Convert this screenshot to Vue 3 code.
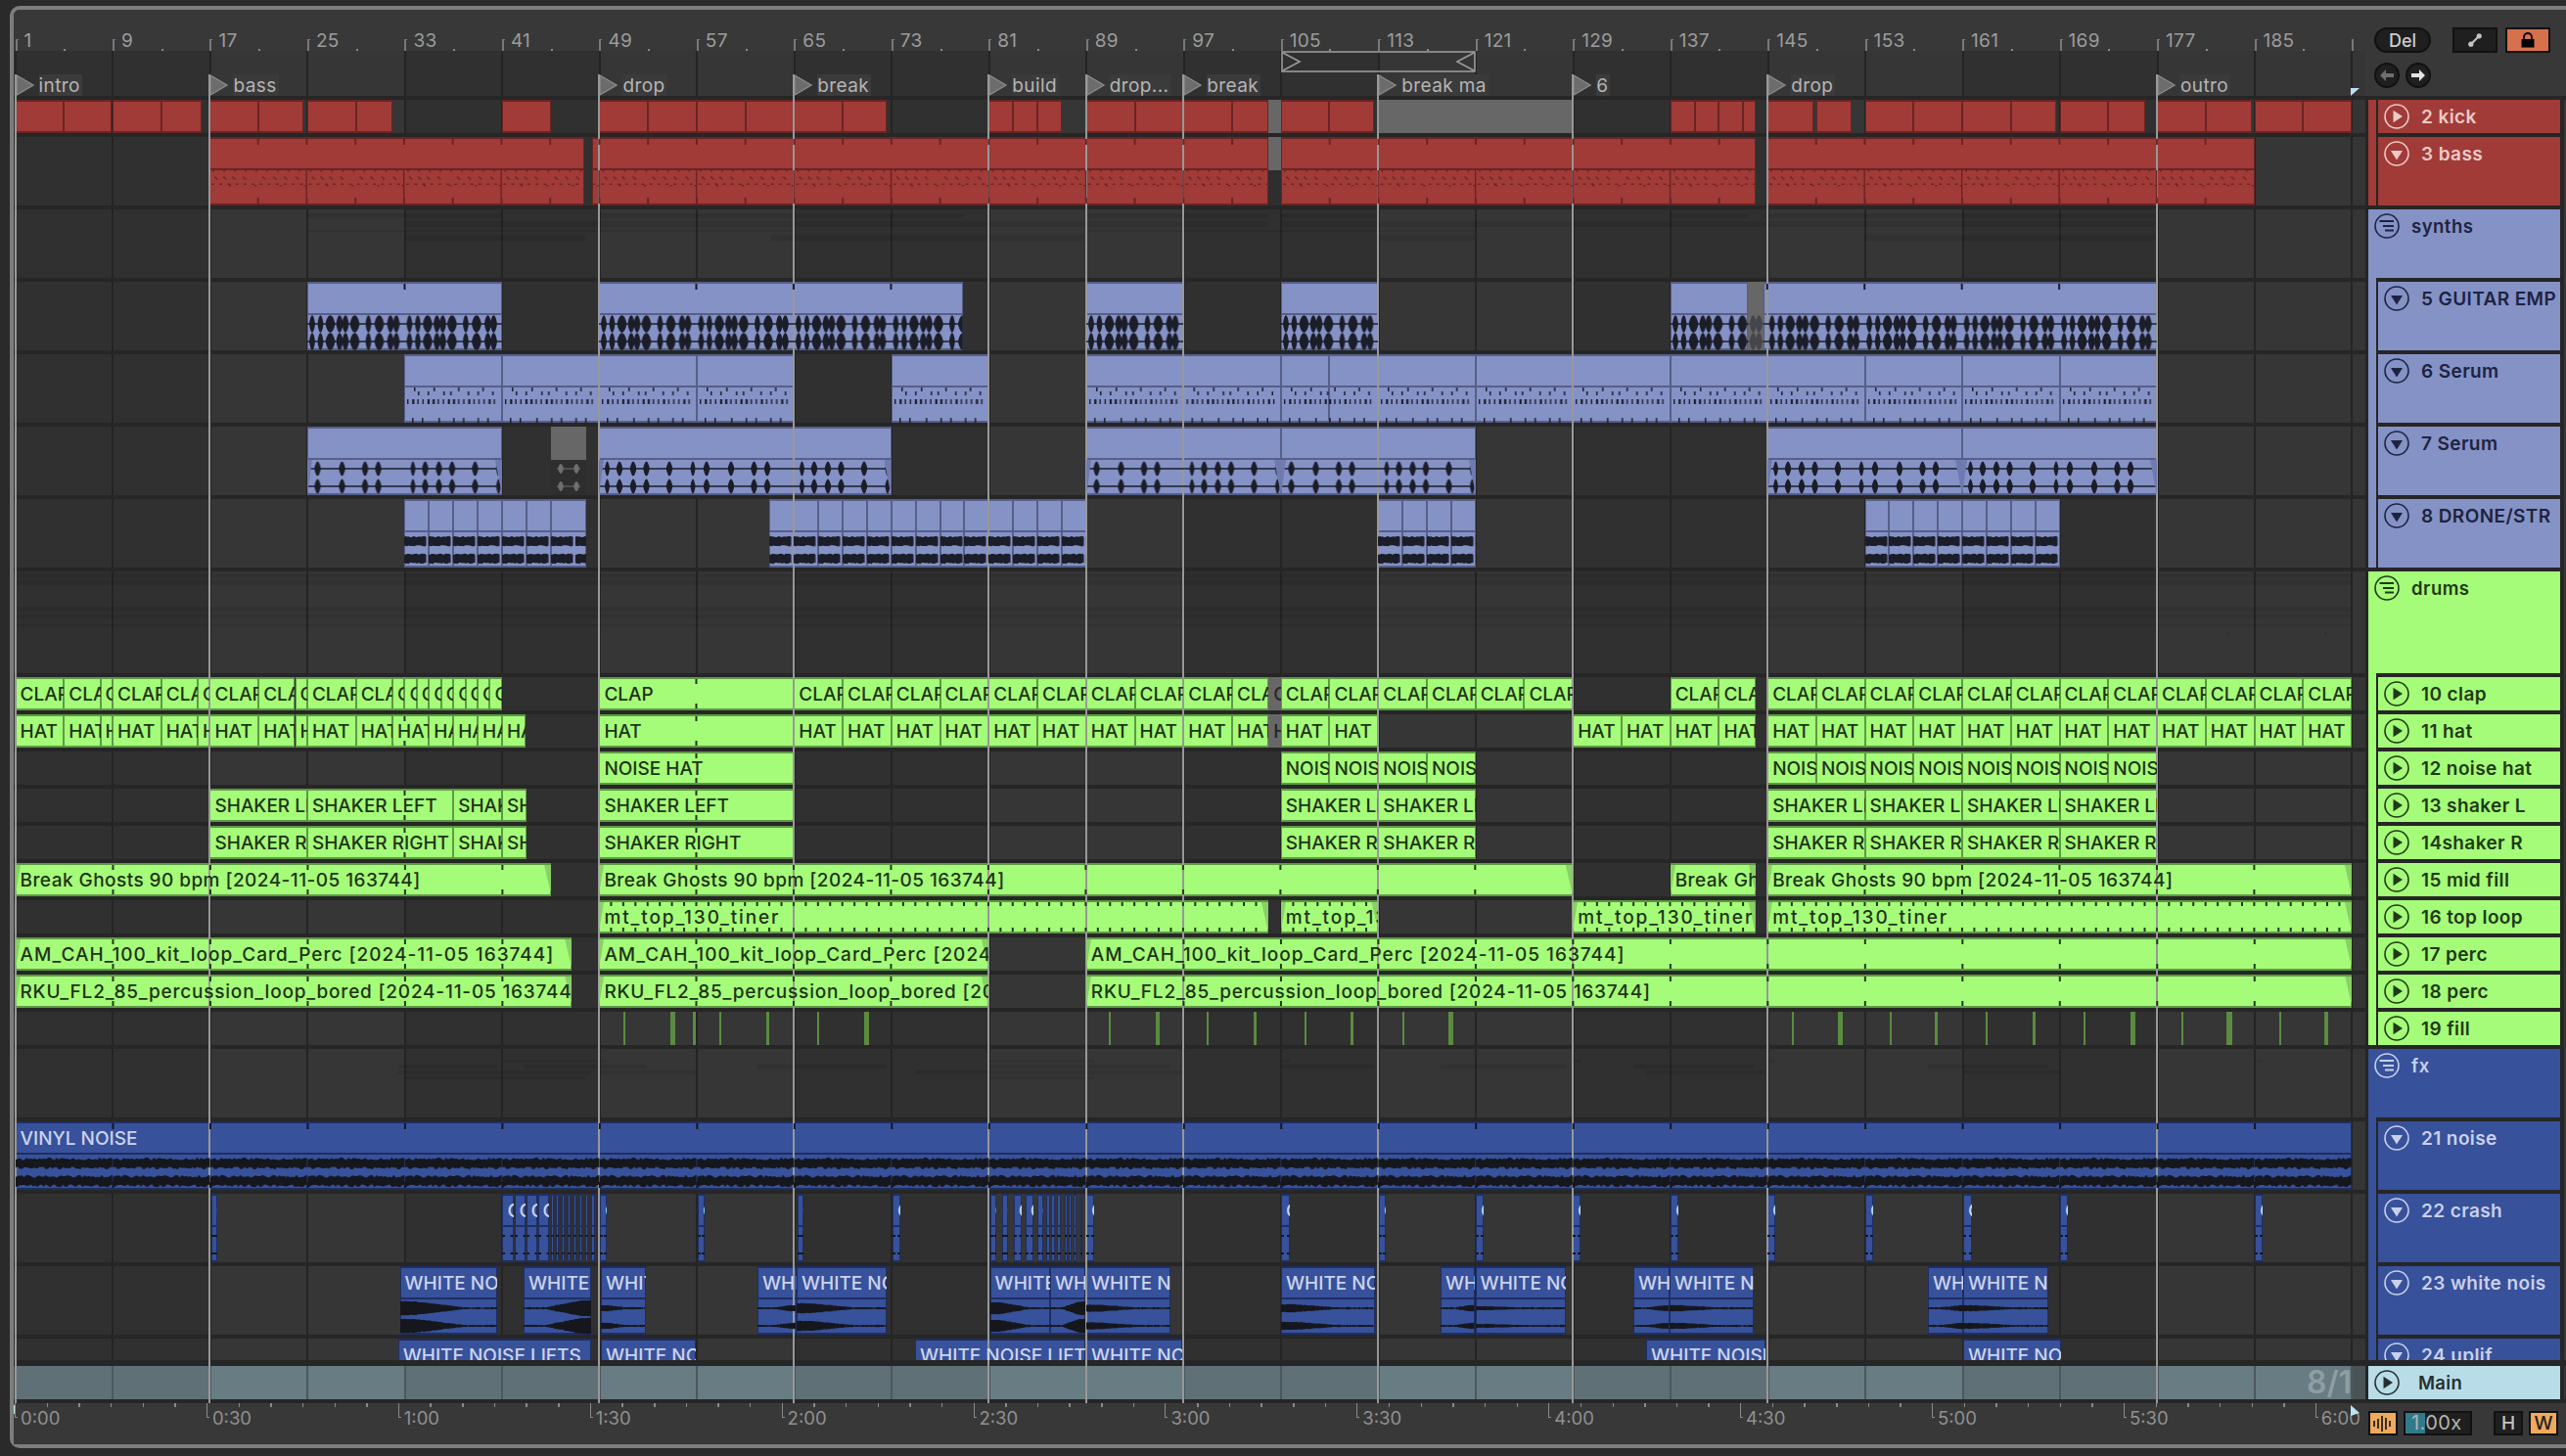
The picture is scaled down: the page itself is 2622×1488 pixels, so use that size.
<script setup>
const BAR = 12.435
const B = (b) => 1.5 + (b - 1) * BAR
const P = (x) => x - 14
const OCT = BAR * 8

function rng(seed) {
  let s = seed
  return () => {
    s = (s * 1664525 + 1013904223) % 4294967296
    return s / 4294967296
  }
}
const rects = (list) => list.map(([x, y, w, h]) => `M${x} ${y}h${w}v${h}h${-w}z`).join('')
const lens = (cx, cy, hw, a) =>
  `M${cx - hw} ${cy}Q${cx} ${cy - 2 * a} ${cx + hw} ${cy}Q${cx} ${cy + 2 * a} ${cx - hw} ${cy}Z`
const blob = (cx, cy, hw, a) => {
  const k = a * 1.33
  const h = hw * 0.55
  return `M${cx - hw} ${cy}C${cx - h} ${cy - k} ${cx + h} ${cy - k} ${cx + hw} ${cy}C${cx + h} ${cy + k} ${cx - h} ${cy + k} ${cx - hw} ${cy}Z`
}

function band(w, cy, amp, jit, step, seed) {
  const r = rng(seed)
  const top = []
  const bot = []
  for (let x = 0; x <= w + 0.01; x += step) {
    const e = amp + (r() - 0.5) * jit
    const e2 = amp + (r() - 0.5) * jit
    top.push(`${x.toFixed(1)} ${(cy - e).toFixed(1)}`)
    bot.unshift(`${x.toFixed(1)} ${(cy + e2).toFixed(1)}`)
  }
  return 'M' + top.concat(bot).join('L') + 'Z'
}

const guitarBlobs = [[5, 3], [13.5, 3], [23.5, 5], [33, 3.5], [39, 3.5], [48.5, 5], [62.5, 3], [73.5, 5], [85, 3.5], [91, 3.5]]
const guitarD =
  rects([[0, 42.2, OCT, 1.6], [0, 60.2, OCT, 1.6]]) +
  guitarBlobs.map(([x, w]) => blob(x, 43, w, 8.8) + blob(x, 61, w, 8.8)).join('')

const s6 = []
;[10, 30, 55, 80].forEach((x) => s6.push([x, 34, 1.5, 4]))
;[14, 24, 40, 47, 65, 75, 90].forEach((x) => s6.push([x, 38, 1.5, 4]))
for (let x = 3; x < 96; x += 5.2) s6.push([x, 46, x % 3 > 1.8 ? 2.2 : 1.4, 5])
;[8, 18, 35, 50, 60, 75, 85].forEach((x) => s6.push([x, 65, 1.5, 5]))

const s7Notes = [8.5, 21, 35, 48.5, 72, 96, 110, 135, 158.5, 172]
const serum7D =
  rects([[0, 42.3, OCT * 2, 1.5], [0, 60.3, OCT * 2, 1.5]]) +
  s7Notes.map((x, i) => {
    const w = i % 5 === 0 ? 2.6 : 3.4
    return lens(x, 43, w, 7.5) + lens(x, 61, w, 7.5)
  }).join('')

const droneD = band(23.5, 43, 4.6, 1.6, 1.5, 3) + band(23.5, 61, 4.6, 1.6, 1.5, 8)

const bs = []
;[5, 14, 23, 34, 54, 65, 76, 88].forEach((x) => {
  bs.push([x, 40.5, 2, 1.5], [x + 1.5, 42, 2, 1.5])
})
for (let x = 2; x < 98; x += 8.2) bs.push([x, 47.5, 3, 1.5])
;[20, 46, 72, 97].forEach((x) => bs.push([x, 49, 2, 1.5]))
for (let x = 3; x < 98; x += 11) bs.push([x, 34, 2, 1.5])

const vinylD = band(OCT, 43, 4.8, 3, 2.2, 11) + band(OCT, 61, 4.8, 3, 2.2, 29)

const patterns = [
  { id: 'w-guitar', w: OCT, d: guitarD, fill: '#1b1d28' },
  { id: 'w-serum6', w: OCT, d: rects(s6), fill: '#1b1d28' },
  { id: 'w-serum7', w: OCT * 2, d: serum7D, fill: '#1b1d28' },
  { id: 'w-drone', w: BAR * 2, d: droneD, fill: '#1b1d28' },
  { id: 'w-bass', w: OCT, d: rects(bs), fill: '#6a2423' },
  { id: 'w-vinyl', w: OCT, d: vinylD, fill: '#15171d' },
]

function ticksFor(a, b, h, step, top, bot) {
  const list = []
  for (let k = 0; k * step < 200; k++) {
    const x = B(1 + k * step)
    if (x > a + 2 && x < b - 2) {
      if (top) list.push([x - 1, 2, 2, top])
      if (bot) list.push([x - 1, h - 2 - bot, 2, bot])
    }
  }
  return rects(list)
}

function fades(a, b, y0, y1, left, right) {
  let d = ''
  if (left) d += `M${a} ${y0}L${a + 5} ${y0}L${a} ${y1}Z`
  if (right) d += `M${b - 7} ${y0}L${b} ${y0}L${b} ${y1}Z`
  return d
}

function whiteWave(a, b, amp, dir) {
  const parts = []
  ;[43, 61].forEach((cy, ci) => {
    const r = rng(17 + ci + Math.round(a))
    const top = []
    const bot = []
    for (let x = a; x <= b; x += 1.5) {
      const t = (x - a) / (b - a)
      const u = dir > 0 ? t : 1 - t
      const env = Math.max(0.9, amp * Math.min(1, Math.max(0, 1.25 - u * 1.7)))
      const e = env + (r() - 0.5) * 0.6
      top.push(`${x.toFixed(1)} ${(cy - e).toFixed(1)}`)
      bot.unshift(`${x.toFixed(1)} ${(cy + e).toFixed(1)}`)
    }
    parts.push('M' + top.concat(bot).join('L') + 'Z')
  })
  return parts.join('')
}

function crashWave(a, b) {
  const w = Math.min(3, (b - a) / 2)
  return rects([[a, 42, w, 2], [b - w, 42, w, 2], [a, 60, w, 2], [b - w, 60, w, 2]])
}

function mk(a, b, label, o = {}) {
  return { a, b, w: b - a, label, ...o }
}
function runs(list, label, o = {}) {
  const out = []
  list.forEach((r) => {
    for (let i = 0; i < r.length - 1; i++) out.push(mk(B(r[i]), B(r[i + 1]), label, o))
  })
  return out
}
const off = (x, y, label, o = {}) => mk(B(x), B(y), label, { off: true, ...o })

function art(c, kind, h) {
  const res = { ticks: '', fade: '', wave: '', pattern: '' }
  if (c.off) {
    if (kind === 'guitar') {
      res.pattern = 'w-guitar'
      return res
    }
    if (kind === 'serum7') {
      const m = c.a + c.w / 2
      res.wave = rects([[c.a + 6, 42.5, c.w - 12, 1], [c.a + 6, 60.5, c.w - 12, 1]]) +
        lens(m - 8, 43, 3, 5) + lens(m + 8, 43, 3, 5) + lens(m - 8, 61, 3, 5) + lens(m + 8, 61, 3, 5)
      return res
    }
    return null
  }
  if (kind === 'green') {
    const st = c.step || 8
    res.ticks = ticksFor(c.a, c.b, h, st, st === 1 ? 4 : 5, st === 1 ? 4 : 5)
    if (c.fade) res.fade = fades(c.a, c.b, 2, h - 2, true, true)
  } else if (kind === 'bass') {
    res.pattern = 'w-bass'
    res.ticks = ticksFor(c.a, c.b, h, 4, 6, 6) + ticksFor(c.a, c.b, 70, 8, 0, 34).replace(/h2/g, 'h1.4').replace(/h-2/g, 'h-1.4')
  } else if (kind === 'guitar') {
    res.pattern = 'w-guitar'
    res.ticks = ticksFor(c.a, c.b, h, 8, 6, 0)
  } else if (kind === 'serum6') {
    res.pattern = 'w-serum6'
  } else if (kind === 'serum7') {
    res.pattern = 'w-serum7'
    res.fade = fades(c.a, c.b, 34, 70, true, true)
  } else if (kind === 'drone') {
    res.pattern = 'w-drone'
  } else if (kind === 'vinyl') {
    res.pattern = 'w-vinyl'
    res.ticks = ticksFor(c.a, c.b, h, 8, 6, 0) + ticksFor(c.a, c.b, h, 8, 0, 6)
  } else if (kind === 'crash') {
    res.wave = crashWave(c.a, c.b)
  } else if (kind === 'white') {
    res.wave = whiteWave(c.a, c.b, c.amp, c.dir)
  }
  return res
}

const eight = (from, to) => {
  const l = []
  for (let b = from; b <= to; b += 4) l.push(b)
  return l
}

const kickClips = runs(
  [[1, 5, 8.9], [9, 13, 16.3], [17, 21, 24.7], [25, 29, 32], [41, 45], [49, 53, 57, 61, 65, 69, 72.65],
   [81, 83, 85, 87], [89, 93, 97, 101, 104], [105, 109, 112.7], [137, 139, 141, 143, 144], [145, 148.8],
   [149, 151.9], [153, 157, 161, 165, 168.7], [169, 173, 176], [177, 181, 184.8], [185, 189, 193]],
  ''
).concat([off(104, 105, ''), off(113, 129, '')])

const bassClips = runs([[17, 47.8], [48.4, 104], [105, 144], [145, 185]], '').concat([off(104, 105, '', { dark: true })])

const guitarClips = runs([[25, 41], [49, 78.9], [89, 97], [105, 113], [137, 143.4], [144.7, 177]], '').concat([off(143.4, 144.7, '', { solid: true })])
const serum6Clips = runs(
  [[33, 41, 49, 57, 65], [73, 81], [89, 105, 109, 113, 121, 129, 137, 145, 153, 161, 169, 177]], '')
const serum7Clips = runs([[25, 41], [49, 73], [89, 105, 121], [145, 161, 177]], '').concat([off(45, 47.9, '', { dark: true })])
const droneClips = runs(
  [[33, 35, 37, 39, 41, 43, 45, 47.9],
   [63, 67, 69, 71, 73, 75, 77, 79, 81, 83, 85, 87, 89],
   [113, 115, 117, 119, 121],
   [153, 155, 157, 159, 161, 163, 165, 167, 169]], '')

const clapClips = runs(
  [[1, 5, 8, 9, 13, 16, 17, 21, 24, 25, 29, 32, 33, 34, 35, 36, 37, 38, 39, 40, 41],
   [49, 65, 69, 73, 77, 81, 85, 89, 93, 97, 101, 104],
   [105, 109, 113, 117, 121, 125, 129], [137, 141, 144], eight(145, 193)], 'CLAP'
).concat([off(104, 105, 'CLAP')])
const hatClips = runs(
  [[1, 5, 8, 9, 13, 16, 17, 21, 24, 25, 29, 32, 35, 37, 39, 41, 42.9],
   [49, 65, 69, 73, 77, 81, 85, 89, 93, 97, 101, 104],
   [105, 109, 113], [129, 133, 137, 141, 144], eight(145, 193)], 'HAT'
).concat([off(104, 105, 'HAT')])
const noiseHatClips = runs([[49, 65], [105, 109, 113, 117, 121], eight(145, 177)], 'NOISE HAT')
const shaker = (t) =>
  runs([[17, 25, 37, 41, 43], [49, 65], [105, 113, 121], [145, 153, 161, 169, 177]], t)

const ghostA = [
  [313, 513, 4, 5], [612, 984, 4, 5], [1109, 1296, 4, 5], [1309, 1409, 4, 5], [1707, 1786, 4, 5], [1802, 2204, 4, 5],
  [413, 1296, 12, 6], [1309, 2204, 12, 6],
  [313, 810, 21, 2], [1109, 1507, 21, 2],
  [413, 598, 26, 6], [787, 1108, 26, 6], [1409, 1507, 26, 6], [1905, 2204, 26, 6],
]
const ghostB = [
  [15, 2403, 2, 5], [15, 2403, 9, 5], [15, 2403, 36, 5], [15, 2403, 44, 4], [15, 2403, 54, 2],
  [2275, 2279, 62, 4], [2375, 2378, 62, 4],
]
const ghostC = [
  [513, 620, 11, 3], [1011, 1118, 11, 3], [1309, 1318, 11, 3], [1608, 1616, 11, 3], [1806, 1814, 11, 3], [2304, 2312, 11, 3],
  [408, 508, 16, 4], [535, 660, 16, 4], [774, 906, 16, 4], [1011, 1196, 16, 4], [1309, 1404, 16, 4], [1472, 1600, 16, 4], [1669, 1792, 16, 4], [1970, 2093, 16, 4],
  [406, 604, 22, 4], [614, 711, 22, 4], [935, 1208, 22, 4], [1682, 1804, 22, 4], [2006, 2106, 22, 4],
  [413, 598, 28, 3], [1011, 1118, 28, 3],
]

const fillSmall = [637, 735, 835, 1133, 1233, 1333, 1433, 1831, 1931, 2029, 2129, 2229, 2329]
const fillWide = [[685, 5], [783, 3], [883, 5], [1181, 4], [1281, 3], [1380, 3], [1480, 5], [1878, 5], [1977, 3], [2077, 3], [2177, 5], [2275, 6], [2375, 4]]
const fillBars = fillSmall
  .map((x) => ({ a: P(x), w: 1.5 }))
  .concat(fillWide.map(([x, w]) => ({ a: P(x), w })))
  .concat([{ a: P(708), w: 3 }])

const crashPx = [[216, 222], [513.4, 525], [525.5, 537], [537.5, 549], [549.5, 561], [563, 566], [568, 571], [574, 577], [580, 583], [586, 589], [592, 595], [598, 601], [604, 607.5], [613, 620], [713, 720], [815, 821], [912, 920], [1011.6, 1018], [1024, 1030], [1035.7, 1044], [1047.8, 1055.8], [1059.8, 1066.5], [1068.8, 1072.8], [1074, 1078], [1080.4, 1084.4], [1088, 1090.6], [1092, 1094.6], [1097, 1099.6], [1104, 1106], [1110, 1118], [1309, 1318], [1409, 1416], [1508, 1516], [1607, 1615], [1707, 1715], [1806, 1814], [1906, 1914], [2006, 2015], [2105, 2113], [2304, 2312]]
const crashClips = crashPx.map(([a, b]) => mk(P(a), P(b), 'CRASH'))

const whitePx = [[408.5, 508, 1, 7], [535, 604, -1, 8], [614, 660, 1, 3], [774, 814, -1, 3], [814, 906, 1, 5], [1011.6, 1072.8, 1, 6], [1073, 1109, -1, 7], [1110, 1196, 1, 3.5], [1309, 1404.5, 1, 4], [1472, 1507, -1, 3], [1507.6, 1600, 1, 2], [1669, 1706, -1, 3], [1706, 1792, 1, 3], [1970, 2006, -1, 3], [2006, 2093, 1, 3]]
const whiteClips = whitePx.map(([a, b, dir, amp]) => mk(P(a), P(b), 'WHITE NOISE', { dir, amp }))

const upliftPx = [[406.7, 604, 'WHITE NOISE LIFTS'], [614, 711, 'WHITE NOISE'], [935, 1109, 'WHITE NOISE LIFTS'], [1110, 1208, 'WHITE NOISE'], [1682, 1804, 'WHITE NOISE LIFTS'], [2006, 2106, 'WHITE NOISE']]
const upliftClips = upliftPx.map(([a, b, l]) => mk(P(a), P(b), l))

function track(name, icon, h, kind, clips, extra = {}) {
  return { name, icon, h, kind, clips, ...extra }
}

const groups = [
  {
    color: 'red', name: '', tracks: [
      track('2 kick', 'play', 34, 'plain', kickClips),
      track('3 bass', 'down', 70, 'bass', bassClips),
    ],
  },
  {
    color: 'peri', name: 'synths', headH: 70, ghost: ghostA, tracks: [
      track('5 GUITAR EMP', 'down', 70, 'guitar', guitarClips),
      track('6 Serum', 'down', 70, 'serum6', serum6Clips),
      track('7 Serum', 'down', 70, 'serum7', serum7Clips),
      track('8 DRONE/STR', 'down', 70, 'drone', droneClips),
    ],
  },
  {
    color: 'green', name: 'drums', headH: 104, ghost: ghostB, tracks: [
      track('10 clap', 'play', 34, 'green', clapClips),
      track('11 hat', 'play', 34, 'green', hatClips),
      track('12 noise hat', 'play', 34, 'green', noiseHatClips),
      track('13 shaker L', 'play', 34, 'green', shaker('SHAKER LEFT')),
      track('14shaker R', 'play', 34, 'green', shaker('SHAKER RIGHT')),
      track('15 mid fill', 'play', 34, 'green', runs([[1, 45], [49, 129], [137, 144], [145, 193]], 'Break Ghosts 90 bpm [2024-11-05 163744]', { fade: true, ls: 0.45 })),
      track('16 top loop', 'play', 34, 'green', runs([[49, 104], [105, 113], [129, 144], [145, 193]], 'mt_top_130_tiner', { fade: true, step: 1, ls: 1.9 })),
      track('17 perc', 'play', 34, 'green', runs([[1, 46.7], [49, 81], [89, 193]], 'AM_CAH_100_kit_loop_Card_Perc [2024-11-05 163744]', { fade: true, ls: 1 })),
      track('18 perc', 'play', 34, 'green', runs([[1, 46.7], [49, 81], [89, 193]], 'RKU_FL2_85_percussion_loop_bored [2024-11-05 163744]', { fade: true, ls: 0.8 })),
      track('19 fill', 'play', 34, 'fill', [], { bars: fillBars }),
    ],
  },
  {
    color: 'blue', name: 'fx', headH: 70, ghost: ghostC, tracks: [
      track('21 noise', 'down', 70, 'vinyl', runs([[1, 193]], 'VINYL NOISE')),
      track('22 crash', 'down', 70, 'crash', crashClips),
      track('23 white nois', 'down', 70, 'white', whiteClips),
      track('24 uplif', 'down', 70, 'plain-tall', upliftClips),
    ],
  },
]

const lanes = []
groups.forEach((g) => {
  if (g.name) lanes.push({ key: g.name, h: g.headH, color: g.color, clips: [], bars: [], ghost: (g.ghost || []).map(([x0, x1, y, h]) => ({ a: P(x0), w: x1 - x0, y, h })) })
  g.tracks.forEach((t) => {
    const tall = t.h === 70
    lanes.push({
      key: t.name, h: t.h, color: g.color, ghost: [], bars: t.bars || [],
      clips: t.clips.map((c) => {
        const a = art(c, t.kind, t.h)
        return { ...c, tall, art: a, vb: `${c.a} 0 ${c.w} ${t.h}` }
      }),
    })
  })
})

const rulerBars = []
for (let b = 1; b <= 185; b += 8) rulerBars.push({ n: b, x: B(b) })
const rulerEnd = B(193)
const rulerDots = []
for (let b = 5; b <= 189; b += 8) rulerDots.push(B(b))

const markers = [[1, 'intro'], [17, 'bass'], [49, 'drop'], [65, 'break'], [81, 'build'], [89, 'drop...'], [97, 'break'], [113, 'break ma'], [129, '6'], [145, 'drop'], [177, 'outro']]
  .map(([b, t]) => ({ x: B(b), t }))
const locators = markers.map((m) => m.x)
const loop = { x: B(105), w: B(121) - B(105) }

const timeLabels = []
for (let i = 0; i <= 12; i++) {
  const s = i * 30
  timeLabels.push({ x: P(21) + i * 195.9, t: `${Math.floor(s / 60)}:${String(s % 60).padStart(2, '0')}` })
}
const timeMinor = []
for (let i = 0; i < 72; i++) {
  if (i % 6 !== 0) timeMinor.push(P(15) + i * 32.65)
}
</script>

<template>
  <div class="page">
    <svg class="defs" width="0" height="0">
      <defs>
        <pattern v-for="p in patterns" :id="p.id" :key="p.id" patternUnits="userSpaceOnUse" x="1.5" y="0" :width="p.w" height="70">
          <path :d="p.d" :fill="p.fill" />
        </pattern>
      </defs>
    </svg>

    <div class="frame">
      <div class="top">
        <div class="top-left">
          <div class="ruler">
            <div v-for="r in rulerBars" :key="r.n" class="rtick" :style="{ left: r.x + 'px' }">
              <span class="rnum">{{ r.n }}</span>
            </div>
            <div class="rtick end" :style="{ left: rulerEnd + 'px' }"></div>
            <i v-for="d in rulerDots" :key="d" class="rdot" :style="{ left: d + 'px' }"></i>
          </div>
          <div class="markers lane">
            <div v-for="m in markers" :key="m.x + m.t" class="marker" :style="{ left: m.x + 'px' }">
              <svg width="20" height="22" viewBox="0 0 20 22"><path d="M1 1 L18 11 L1 21 Z" fill="#6c6c6c" stroke="#8a8a8a" stroke-width="1.4" /></svg>
              <span class="marker-label">{{ m.t }}</span>
            </div>
            <svg class="end-flag" width="10" height="10" viewBox="0 0 10 10"><path d="M0 2 L9 2 L0 10 Z" fill="#bfe3ee" /></svg>
          </div>
          <div class="loop" :style="{ left: loop.x + 'px', width: loop.w + 'px' }">
            <svg :width="loop.w" height="22" :viewBox="`0 0 ${loop.w} 22`">
              <rect x="1" y="1" :width="loop.w - 2" height="20" fill="none" stroke="#9a9a9a" stroke-width="1.6" />
              <path d="M2 2 L19 11 L2 20" fill="none" stroke="#9a9a9a" stroke-width="1.6" />
              <path :d="`M${loop.w - 2} 2 L${loop.w - 19} 11 L${loop.w - 2} 20`" fill="none" stroke="#9a9a9a" stroke-width="1.6" />
            </svg>
          </div>
        </div>
        <div class="controls">
          <div class="ctl-row">
            <button class="pill">Del</button>
            <button class="sq">
              <svg width="16" height="16" viewBox="0 0 16 16"><path d="M3.5 12.5 L12.5 3.5" stroke="#c4c4c4" stroke-width="2" /><circle cx="3.8" cy="12.2" r="2.6" fill="#c4c4c4" /><circle cx="12.2" cy="3.8" r="2.6" fill="#c4c4c4" /></svg>
            </button>
            <button class="sq lock">
              <svg width="16" height="16" viewBox="0 0 16 16"><path d="M4 7 V5 a4 4 0 0 1 8 0 V7" fill="none" stroke="#000" stroke-width="1.8" /><rect x="1.5" y="7" width="13" height="8.5" fill="#000" /></svg>
            </button>
          </div>
          <div class="ctl-row arrows">
            <button class="round">
              <svg width="16" height="14" viewBox="0 0 16 14"><path d="M1 7 L7 1 V5 H15 V9 H7 V13 Z" fill="#6e6e6e" /></svg>
            </button>
            <button class="round">
              <svg width="16" height="14" viewBox="0 0 16 14"><path d="M15 7 L9 1 V5 H1 V9 H9 V13 Z" fill="#e2e2e2" /></svg>
            </button>
          </div>
        </div>
      </div>

      <div class="body">
        <div class="timeline">
          <div v-for="l in lanes" :key="l.key" class="lane" :style="{ height: l.h + 'px' }">
            <i v-for="(g, i) in l.ghost" :key="i" class="ghost" :style="{ left: g.a + 'px', width: g.w + 'px', top: g.y + 'px', height: g.h + 'px' }"></i>
            <i v-for="(b, i) in l.bars" :key="i" class="fillbar" :style="{ left: b.a + 'px', width: b.w + 'px' }"></i>
            <div
              v-for="(c, i) in l.clips"
              :key="i"
              class="clip"
              :class="[c.off ? 'off' : l.color, { tall: c.tall, dark: c.dark, solid: c.solid }]"
              :style="{ left: c.a + 'px', width: c.w + 'px' }"
            >
              <svg v-if="c.art" class="art" :width="c.w" :height="l.h" :viewBox="c.vb" preserveAspectRatio="none">
                <rect v-if="c.art.pattern" class="wave-fill" :x="c.a" y="34" :width="c.w" height="36" :fill="`url(#${c.art.pattern})`" />
                <path v-if="c.art.fade" class="fade" :d="c.art.fade" />
                <path v-if="c.art.wave" class="wave" :d="c.art.wave" />
                <path v-if="c.art.ticks" class="tick" :d="c.art.ticks" />
              </svg>
              <span v-if="c.label" class="clip-label" :style="{ letterSpacing: (c.ls || 0) + 'px' }">{{ c.label }}</span>
            </div>
          </div>
        </div>

        <div class="heads">
          <section v-for="g in groups" :key="g.color" class="group" :class="g.color">
            <div v-if="g.name" class="group-head" :style="{ height: g.headH + 'px' }">
              <svg class="ico" width="28" height="28" viewBox="0 0 28 28">
                <circle cx="14" cy="14" r="12" fill="none" stroke="currentColor" stroke-width="1.6" />
                <path d="M6.5 9 H21 M10 14 H21 M12 18.5 H21" stroke="currentColor" stroke-width="1.8" fill="none" />
              </svg>
              <span class="group-name">{{ g.name }}</span>
            </div>
            <div class="kids" :class="{ first: !g.name }">
              <div v-for="t in g.tracks" :key="t.name" class="track" :style="{ height: t.h + 'px' }">
                <svg class="ico" width="28" height="28" viewBox="0 0 28 28">
                  <circle cx="14" cy="14" r="12" fill="none" stroke="currentColor" stroke-width="1.6" />
                  <path v-if="t.icon === 'play'" d="M10.5 7.8 L20 14 L10.5 20.2 Z" fill="currentColor" />
                  <path v-else d="M8 11 H20 L14 20.5 Z" fill="currentColor" />
                </svg>
                <span class="track-name">{{ t.name }}</span>
              </div>
            </div>
          </section>
        </div>
      </div>

      <div class="main-row">
        <div class="lane tint">
          <span class="sig">8/1</span>
        </div>
        <div class="main-head">
          <svg class="ico" width="28" height="28" viewBox="0 0 28 28">
            <circle cx="14" cy="14" r="12" fill="none" stroke="currentColor" stroke-width="1.6" />
            <path d="M10.5 7.8 L20 14 L10.5 20.2 Z" fill="currentColor" />
          </svg>
          <span class="main-name">Main</span>
        </div>
      </div>

      <div class="bottom">
        <div class="times">
          <i class="flag-left"></i>
          <i v-for="x in timeMinor" :key="x" class="tminor" :style="{ left: x + 'px' }"></i>
          <div v-for="t in timeLabels" :key="t.t" class="time" :style="{ left: t.x + 'px' }">
            <i class="tmajor"></i><span>{{ t.t }}</span>
          </div>
          <svg class="end-flag2" width="10" height="12" viewBox="0 0 10 12"><path d="M0 0 L9 8 L0 11 Z" fill="#bfe3ee" /></svg>
        </div>
        <div class="tools">
          <button class="tool amber">
            <svg width="22" height="18" viewBox="0 0 22 18"><path d="M2 6v6M6 4v10M10 1v16M14 3v12M18 6v6" stroke="#222" stroke-width="1.8" /></svg>
          </button>
          <div class="tempo"><span class="tempo-fill"></span><span class="tempo-text">1.00x</span></div>
          <button class="tool key">H</button>
          <button class="tool key amber">W</button>
        </div>
      </div>

      <i v-for="x in locators" :key="x" class="locator" :style="{ left: x - 1 + 'px' }"></i>
    </div>
  </div>
</template>

<style>
html, body { margin: 0; background: #2a2a2a; }
</style>

<style scoped>
.page {
  width: 2622px;
  height: 1488px;
  box-sizing: border-box;
  padding: 6px 0 8px 10px;
  background: #2a2a2a;
  overflow: hidden;
  font-family: Inter, "Liberation Sans", sans-serif;
}
.defs { position: absolute; }
.frame {
  position: relative;
  height: 100%;
  box-sizing: border-box;
  border: solid #7d7d7d;
  border-width: 4px 0 4px 4px;
  border-top-left-radius: 10px;
  border-bottom-left-radius: 10px;
  background: #262626;
  display: flex;
  flex-direction: column;
}
.top { height: 88px; display: flex; background: #383838; border-top-left-radius: 6px; }
.top-left { position: relative; width: 2406px; flex: none; }
.ruler { position: relative; height: 42px; }
.rtick {
  position: absolute;
  top: 30px;
  height: 12px;
  width: 3px;
  box-sizing: border-box;
  border-left: 2px solid #787878;
  border-top: 1px solid #787878;
}
.rtick.end { border-top: none; }
.rnum {
  position: absolute;
  left: 7px;
  bottom: -2px;
  font-size: 19px;
  letter-spacing: 0.3px;
  line-height: 24px;
  color: #9c9c9c;
}
.rdot { position: absolute; top: 40px; width: 2px; height: 2px; background: #8a8a8a; }
.markers { position: relative; height: 46px; }
.marker { position: absolute; top: 24px; display: flex; height: 22px; }
.marker svg { flex: none; }
.marker-label {
  margin-left: 4px;
  padding-right: 2px;
  font-size: 19px;
  letter-spacing: 0.4px;
  line-height: 23px;
  height: 22px;
  color: #b5b5b5;
  background: #3b3b3b;
  white-space: nowrap;
}
.end-flag { position: absolute; left: 2388px; top: 36px; }
.loop { position: absolute; top: 42px; height: 22px; }
.loop svg { display: block; }

.controls { flex: 1; padding: 18px 0 0 6px; display: flex; flex-direction: column; gap: 10px; }
.ctl-row { display: flex; align-items: center; }
.ctl-row.arrows { gap: 6px; }
button { padding: 0; margin: 0; font: inherit; display: flex; align-items: center; justify-content: center; box-sizing: border-box; }
.pill {
  width: 58px; height: 26px;
  border-radius: 13px;
  background: #1f1f1f;
  border: 2px solid #111;
  color: #cdcdcd;
  font-size: 18px;
  font-weight: 500;
  margin-right: 22px;
}
.sq { width: 46px; height: 26px; background: #1f1f1f; border: 2px solid #111; margin-right: 8px; }
.sq.lock { background: #d7704c; }
.round { width: 26px; height: 26px; border-radius: 50%; background: #1f1f1f; border: 2px solid #111; }

.body {
  height: 1288px;
  margin-top: 4px;
  display: flex;
  overflow: hidden;
  flex: none;
  border-right: 2px solid #363636;
}
.timeline { width: 2406px; flex: none; display: flex; flex-direction: column; gap: 4px; }
.lane {
  position: relative;
  flex: none;
  width: 2403px;
  --shade-a: #303030;
  --shade-b: #363636;
  --line: #242424;
  --rest: #353535;
  background:
    linear-gradient(var(--line), var(--line)) 2388px 0 / 2px 100% no-repeat,
    repeating-linear-gradient(90deg, var(--line) 0 2px, transparent 2px 99.48px) 0.5px 0 / 2388px 100% no-repeat,
    repeating-linear-gradient(90deg, var(--shade-a) 0 198.96px, var(--shade-b) 198.96px 397.92px) 1.5px 0 / 2387px 100% no-repeat,
    var(--rest);
}
.ghost { position: absolute; background: rgba(0, 0, 0, 0.09); }
.fillbar { position: absolute; top: 0; bottom: 0; background: #5b8b40; }

.clip {
  position: absolute;
  top: 0;
  height: 100%;
  overflow: hidden;
  box-sizing: border-box;
  background: var(--body);
  box-shadow: inset 1px 0 var(--edge), inset -1px 0 var(--edge), inset 0 2px var(--edge), inset 0 -2px var(--edge);
}
.clip.red { --body: #a03b38; --edge: #6a2423; --ink: #6a2423; }
.clip.peri { --body: #8592c6; --edge: #575f88; --ink: #1b1d28; }
.clip.green { --body: #a5fc79; --edge: #5e9a45; --ink: #24381a; }
.clip.blue { --body: #37519b; --edge: #1e2e64; --ink: #15171d; }
.clip.off { --body: #676767; --edge: #676767; }
.clip.off .wave-fill { opacity: 0.45; }
.clip.tall::after {
  content: "";
  position: absolute;
  left: 0;
  right: 0;
  top: 32px;
  height: 2px;
  background: var(--edge);
}
.clip.dark.tall::before {
  content: "";
  position: absolute;
  left: 0;
  right: 0;
  top: 34px;
  bottom: 0;
  background: #2e2e2e;
}
.art { position: absolute; left: 0; top: 0; display: block; z-index: 1; }
.tick { fill: var(--ink); }
.wave { fill: #15171d; }
.clip.off .wave { fill: #6e6e6e; }
.clip.green .fade { fill: #89d066; }
.clip.peri .fade { fill: #6f7bb0; }
.clip-label {
  position: absolute;
  left: 5px;
  top: 1px;
  z-index: 2;
  line-height: 34px;
  font-size: 19px;
  font-weight: 500;
  white-space: nowrap;
  color: #1f3316;
}
.clip.blue .clip-label { color: #ccd3ec; }
.clip.off .clip-label { color: #262626; }

.heads { width: 196px; flex: none; margin-left: 0; display: flex; flex-direction: column; gap: 4px; }
.group { background: var(--g); color: var(--ink); flex: none; }
.group.red { --g: #a03b38; --ink: #ecc9c6; }
.group.peri { --g: #8592c6; --ink: #1d2340; }
.group.green { --g: #a5fc79; --ink: #1f3a14; }
.group.blue { --g: #37519b; --ink: #c9d0ea; }
.group-head { display: flex; align-items: flex-start; padding: 3px 0 0 5px; box-sizing: border-box; gap: 11px; }
.ico { flex: none; display: block; }
.group-name { font-size: 18.5px; font-weight: 600; letter-spacing: 0.5px; line-height: 28px; }
.kids {
  margin-left: 8px;
  background: #262626;
  padding-top: 4px;
  padding-left: 2px;
  display: flex;
  flex-direction: column;
  gap: 4px;
}
.kids.first { padding-top: 0; }
.track {
  flex: none;
  background: var(--g);
  display: flex;
  align-items: flex-start;
  box-sizing: border-box;
  padding: 3px 0 0 5px;
  gap: 11px;
  overflow: hidden;
}
.track-name { font-size: 19px; font-weight: 600; letter-spacing: 0.4px; line-height: 29px; white-space: nowrap; }

.main-row { height: 34px; margin-top: 6px; display: flex; flex: none; border-right: 2px solid #363636; }
.lane.tint {
  width: 2403px;
  height: 34px;
  --shade-a: #5f7177;
  --shade-b: #687c83;
  --line: #4b585d;
  --rest: #4a5356;
}
.sig {
  position: absolute;
  left: 2343px;
  top: 0;
  line-height: 34px;
  font-size: 32px;
  font-weight: 600;
  color: #8f9ea3;
}
.main-head {
  margin-left: 3px;
  width: 196px;
  background: #b9dde8;
  color: #26302f;
  display: flex;
  align-items: flex-start;
  padding: 3px 0 0 5px;
  box-sizing: border-box;
  gap: 18px;
}
.main-name { font-size: 18.5px; font-weight: 600; letter-spacing: 0.3px; line-height: 28px; }

.bottom { flex: 1; margin-top: 4px; display: flex; background: #383838; }
.times { position: relative; width: 2406px; flex: none; overflow: hidden; }
.tminor { position: absolute; top: 0; width: 1.5px; height: 4px; background: #8a8a8a; }
.time { position: absolute; top: 0; height: 30px; }
.tmajor {
  position: absolute;
  left: -6px;
  top: 0;
  width: 3px;
  height: 15px;
  box-sizing: border-box;
  border-left: 1.5px solid #8a8a8a;
  border-bottom: 1px solid #8a8a8a;
}
.time span {
  position: absolute;
  left: 0;
  top: 3px;
  line-height: 24px;
  font-size: 18.5px;
  color: #909090;
}
.flag-left { position: absolute; left: 0; top: 2px; width: 2px; height: 9px; background: #bfe3ee; }
.end-flag2 { position: absolute; left: 2388px; top: 2px; }
.tools { flex: 1; padding-top: 8px; display: flex; align-items: flex-start; gap: 6px; }
.tool { width: 30px; height: 25px; background: #1f1f1f; border: 2px solid #111; color: #c4c4c4; font-size: 19px; font-weight: 500; }
.tool.amber { background: #f0a95d; color: #222; }
.tool.key:first-of-type { margin-left: 16px; }
.tempo {
  position: relative;
  width: 70px;
  height: 25px;
  box-sizing: border-box;
  background: #1f1f1f;
  border: 2px solid #111;
  margin-right: 16px;
}
.tempo-fill { position: absolute; left: 0; top: 0; bottom: 0; width: 20px; background: #2f7a8b; }
.tempo-text {
  position: absolute;
  left: 6px;
  top: 0;
  line-height: 21px;
  font-size: 20px;
  letter-spacing: 0.4px;
  color: #b4b4b4;
}
.locator {
  position: absolute;
  top: 66px;
  height: 1358px;
  width: 2px;
  background: #989898;
  pointer-events: none;
}
</style>
